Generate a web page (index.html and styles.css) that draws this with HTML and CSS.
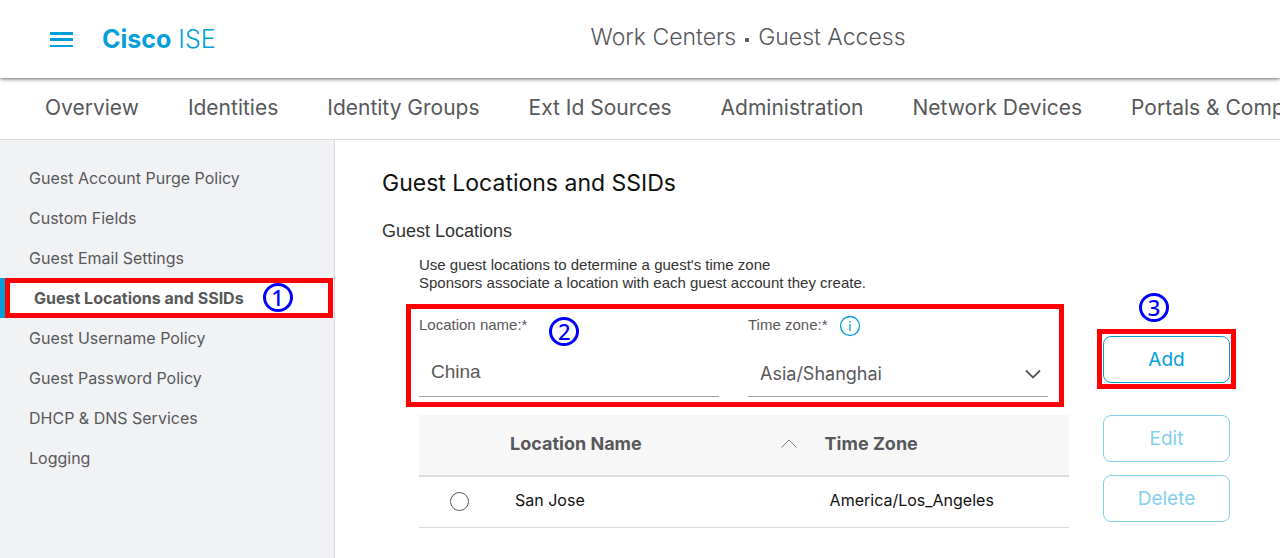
FILE: index.html
```html
<!DOCTYPE html>
<html lang="en">
<head>
<meta charset="utf-8">
<title>Cisco ISE</title>
<link rel="stylesheet" href="styles.css">
</head>
<body>
<header class="topbar">
  <button class="menu" type="button" aria-label="Menu">
    <svg width="24" height="16" viewBox="0 0 24 16" fill="#049fd9"><path d="M0 0h23v3H0zM0 6h23v3H0zM0 13h23v2H0z"/></svg>
  </button>
  <div class="brand"><b>Cisco</b> ISE</div>
  <div class="crumb">Work Centers<i class="dot"></i>Guest Access</div>
</header>
<nav class="tabs">
  <a href="#">Overview</a>
  <a href="#">Identities</a>
  <a href="#">Identity Groups</a>
  <a href="#">Ext Id Sources</a>
  <a href="#">Administration</a>
  <a href="#">Network Devices</a>
  <a href="#">Portals &amp; Components</a>
</nav>
<div class="body">
  <nav class="side">
    <a href="#">Guest Account Purge Policy</a>
    <a href="#">Custom Fields</a>
    <a href="#">Guest Email Settings</a>
    <a class="active marked" href="#">Guest Locations and SSIDs<span class="step">1</span></a>
    <a href="#">Guest Username Policy</a>
    <a href="#">Guest Password Policy</a>
    <a href="#">DHCP &amp; DNS Services</a>
    <a href="#">Logging</a>
  </nav>
  <main class="main">
    <h1>Guest Locations and SSIDs</h1>
    <h2>Guest Locations</h2>
    <div class="section">
      <p class="intro">Use guest locations to determine a guest's time zone<br>Sponsors associate a location with each guest account they create.</p>
      <div class="columns">
        <div class="left">
          <form class="fields">
            <div class="field">
              <div class="label-row"><label for="name">Location name:*</label><span class="step">2</span></div>
              <input id="name" type="text" value="China">
            </div>
            <div class="field">
              <div class="label-row"><label for="zone">Time zone:*</label>
                <svg class="info" width="22" height="22" viewBox="0 0 22 22" fill="none" stroke="#049fd9"><circle cx="11" cy="11" r="9.500" stroke-width="1.300"/><path d="M11 9v7M11 6v1.600" stroke-width="1.300"/></svg>
              </div>
              <div class="select-box">
                <select id="zone"><option>Asia/Shanghai</option></select>
                <svg class="chevron" width="16" height="10" viewBox="0 0 16 10" fill="none" stroke="#58585b" stroke-width="1.800"><path d="M1 1.500l7 7 7-7"/></svg>
              </div>
            </div>
          </form>
          <table class="grid">
            <thead><tr>
              <th class="pick"></th>
              <th class="name"><div class="sort">Location Name<svg width="16" height="9" viewBox="0 0 16 9" fill="none" stroke="#7c7c80"><path d="M.5 8.500L8 1l7.500 7.500"/></svg></div></th>
              <th>Time Zone</th>
            </tr></thead>
            <tbody><tr>
              <td class="pick"><input type="radio" name="location" aria-label="San Jose"></td>
              <td>San Jose</td>
              <td>America/Los_Angeles</td>
            </tr></tbody>
          </table>
        </div>
        <div class="actions">
          <div class="add"><span class="step">3</span><button type="button">Add</button></div>
          <button type="button" disabled>Edit</button>
          <button type="button" disabled>Delete</button>
        </div>
      </div>
    </div>
  </main>
</div>
</body>
</html>
```
FILE: styles.css
```css
* { box-sizing: border-box; }
body {
  margin: 0;
  min-height: 100vh;
  display: flex;
  flex-direction: column;
  background: #fff;
  color: #58585b;
  font-family: Inter, "Liberation Sans", sans-serif;
}
a { color: inherit; text-decoration: none; }
button { font: inherit; cursor: pointer; }

.topbar {
  position: relative;
  z-index: 1;
  display: grid;
  grid-template-columns: 24px 42% auto;
  align-items: center;
  height: 78px;
  padding-left: 50px;
  box-shadow: 0 1px 4px rgba(0, 0, 0, 0.6);
}
.menu { display: flex; padding: 2px 0 0; border: 0; background: none; }
.brand { padding-left: 28px; color: #049fd9; font-size: 25px; font-weight: 300; }
.brand b { font-weight: 700; }
.crumb { display: flex; align-items: center; gap: 9px; padding-bottom: 4px; font-size: 23px; font-weight: 300; white-space: nowrap; }
.dot { width: 4px; height: 4px; margin-top: 5px; background: #58585b; border-radius: 1px; }

.tabs {
  display: flex;
  align-items: center;
  gap: 49px;
  height: 62px;
  padding: 0 0 3px 45px;
  overflow: hidden;
  border-bottom: 1px solid #d9d9d9;
  font-size: 21px;
  white-space: nowrap;
}

.body { flex: 1; display: flex; }
.side {
  flex: 0 0 335px;
  padding-top: 18px;
  background: #f1f2f4;
  border-right: 1px solid #d9d9dc;
  font-size: 16px;
}
.side a { display: flex; align-items: center; height: 40px; padding: 0 0 1px 29px; }
.side .active {
  gap: 19px;
  border-left: 5px solid #049fd9;
  background: #fff;
  font-weight: 700;
}
.marked { position: relative; }
.marked::after { content: ""; position: absolute; inset: 0 1px 0 0; border: 5px solid #f00; }

.step {
  display: inline-flex;
  align-items: center;
  justify-content: center;
  width: 30px;
  height: 29px;
  border: 3px solid #00f;
  border-radius: 50%;
  color: #00f;
  font: 500 22px/23px "Noto Sans", sans-serif;
}

.main { flex: 1; min-width: 0; padding: 29px 50px 30px 47px; }
h1 { margin: 0; color: #111; font-size: 23px; line-height: 28px; font-weight: 400; }
h2 { margin: 23px 0 0; color: #333; font: 18px/22px "Liberation Sans", Arial, sans-serif; }
.section { padding-left: 37px; }
.intro { margin: 14px 0 0; color: #333; font: 15px/18px "Liberation Sans", Arial, sans-serif; }
.columns { display: grid; grid-template-columns: minmax(0, 1fr) 127px; gap: 34px; }

.fields {
  position: relative;
  display: grid;
  grid-template-columns: 1fr 1fr;
  gap: 29px;
  margin: 22px 21px 0 0;
}
.fields::before { content: ""; position: absolute; inset: -10px -16px -10px -13px; border: 5px solid #f00; pointer-events: none; }
.label-row { display: flex; align-items: center; height: 24px; font: 15px/20px "Liberation Sans", Arial, sans-serif; }
.label-row label { padding-bottom: 2px; }
.label-row .step { margin: 10px 0 0 22px; }
.info { margin-left: 12px; }
.field input, .field select {
  display: block;
  width: 100%;
  height: 59px;
  padding: 10px 12px 0;
  border: 0;
  border-bottom: 1px solid #9e9ea2;
  border-radius: 0;
  background: none;
  color: #58585b;
  font: 19px "Liberation Sans", Arial, sans-serif;
}
.field select { appearance: none; padding-top: 13px; font: 18px Inter, sans-serif; }
.select-box { position: relative; }
.chevron { position: absolute; right: 7px; bottom: 18px; pointer-events: none; }

.grid { width: 100%; margin-top: 18px; table-layout: fixed; border-collapse: collapse; text-align: left; }
.grid th { height: 61px; padding: 0 0 4px; background: #f7f7f7; font-size: 18px; font-weight: 700; }
.grid thead tr { border-bottom: 2px solid #dbdbdb; }
.grid tbody tr { border-bottom: 1px solid #dbdbdb; }
.grid td { height: 51px; padding: 0 0 3px 5px; color: #111; font-size: 16px; }
.grid .pick { width: 14%; }
.grid .name { width: 48.4%; }
.grid td.pick { padding: 0 10px 0 0; }
.sort { display: flex; align-items: center; justify-content: space-between; padding-right: 28px; }
.grid input {
  appearance: none;
  display: block;
  width: 19px;
  height: 19px;
  margin: 0 auto;
  border: 1px solid #58585b;
  border-radius: 50%;
}

.actions { display: flex; flex-direction: column; gap: 13px; }
.actions button {
  width: 100%;
  height: 47px;
  padding: 0 0 1px;
  border: 1px solid #049fd9;
  border-radius: 8px;
  background: #fff;
  color: #049fd9;
  font-size: 19px;
}
.actions button:disabled { border-color: #82cfec; color: #82cfec; }
.add { position: relative; margin: 44px 0 19px; }
.add::after { content: ""; position: absolute; inset: -7px -6px -6px -6px; border: 5px solid #f00; pointer-events: none; }
.add .step { position: absolute; left: 36px; top: -43px; }
```
